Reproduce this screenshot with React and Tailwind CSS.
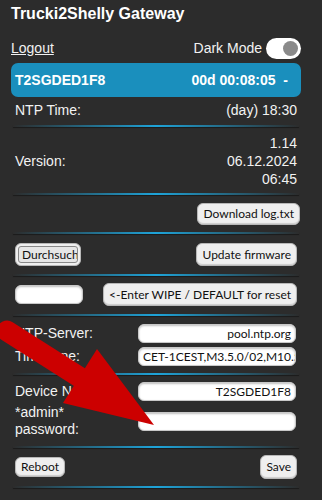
import React from "react";

const label = "text-[14px] leading-[17px] text-[#f2f2f2]";
const btn =
  "rounded-[6px] border border-[#b8b8b8] bg-[#efefef] px-[5px] text-[12px] text-[#111] shadow-[inset_0_-1px_1px_rgba(0,0,0,0.15)] whitespace-nowrap";
const inp =
  "h-[19px] w-[158px] rounded-[6px] border border-[#c8c8c8] bg-white px-[4px] text-[12px] text-[#111] shadow-[inset_0_1px_2px_rgba(0,0,0,0.25)] overflow-hidden whitespace-nowrap flex items-center";
const btnFont = { fontFamily: 'Lato, "Noto Sans", sans-serif' };

function Sep({ mt }) {
  return (
    <div className={`${mt} mx-[2px] h-[2px] bg-linear-to-r from-transparent via-[#1ea3d8] to-transparent shadow-[0_1px_1px_rgba(0,0,0,0.4)]`}></div>
  );
}

function Field({ mt, name, value, left }) {
  return (
    <div className={`${mt} flex h-[19px] items-center px-[4px]`}>
      <div className={`${label} w-[123px] shrink-0`}>{name}</div>
      <div className={`${inp} ${left ? "justify-start" : "justify-end"}`} style={btnFont}>
        {value}
      </div>
    </div>
  );
}

export default function App() {
  return (
    <div
      className="relative min-h-[500px] w-[322px] overflow-hidden bg-[#2c2c2c] pl-[11px] pr-[21px]"
      style={{ fontFamily: '"Liberation Sans", Arial, sans-serif' }}
    >
      <h1 className="pt-[3px] text-[16px] font-bold leading-[22px] text-white">
        Trucki2Shelly Gateway
      </h1>

      <div className="mt-[11px] flex h-[24px] items-center justify-between">
        <a className="text-[14px] text-[#f2f2f2] underline">Logout</a>
        <div className="flex items-center gap-[4px]">
          <span className="text-[14px] text-[#f2f2f2]">Dark Mode</span>
          <div className="flex h-[21px] w-[35px] items-center justify-end rounded-full bg-white pr-[3px]">
            <div className="h-[15px] w-[15px] rounded-full bg-[#8a8a8a]"></div>
          </div>
        </div>
      </div>

      <div className="mt-[3px] flex h-[34px] items-center justify-between rounded-[7px] bg-[#1a8fbd] pl-[4px] pr-[13px] text-[14px] font-bold text-white">
        <span>T2SGDED1F8</span>
        <span>00d 00:08:05&nbsp;&nbsp;-</span>
      </div>

      <div className="flex h-[26px] items-center justify-between px-[4px]">
        <span className={label}>NTP Time:</span>
        <span className={label}>(day) 18:30</span>
      </div>

      <Sep mt="mt-[2px]" />

      <div className="mt-[7px] flex items-center justify-between px-[4px]">
        <span className={label}>Version:</span>
        <div className="text-right text-[14px] leading-[18px] text-[#f2f2f2]">
          <div>1.14</div>
          <div>06.12.2024</div>
          <div>06:45</div>
        </div>
      </div>

      <Sep mt="mt-[5px]" />

      <div className="mt-[8px] flex h-[22px] justify-end px-[1px]" style={btnFont}>
        <button className={btn}>Download log.txt</button>
      </div>

      <Sep mt="mt-[7px]" />

      <div className="mt-[9px] flex h-[23px] items-center justify-between px-[4px]" style={btnFont}>
        <div className="flex h-[23px] w-[66px] items-center rounded-[6px] border border-[#b8b8b8] bg-[#efefef] p-[2px]">
          <div className="h-full w-full overflow-hidden whitespace-nowrap rounded-[3px] border border-[#888] bg-[#e6e6e6] pl-[3px] text-[12px] leading-[15px] text-[#111]">
            Durchsuchen
          </div>
        </div>
        <button className={`${btn} h-[23px]`}>Update firmware</button>
      </div>

      <Sep mt="mt-[8px]" />

      <div className="mt-[7px] flex h-[23px] items-center justify-between px-[4px]" style={btnFont}>
        <div className="h-[19px] w-[68px] rounded-[6px] border border-[#c8c8c8] bg-white shadow-[inset_0_1px_2px_rgba(0,0,0,0.25)]"></div>
        <button className={`${btn} h-[23px]`}>&lt;-Enter WIPE / DEFAULT for reset</button>
      </div>

      <Sep mt="mt-[8px]" />

      <Field mt="mt-[8px]" name="NTP-Server:" value="pool.ntp.org" />
      <Field mt="mt-[4px]" name="Timezone:" value="CET-1CEST,M3.5.0/02,M10.5.0/03" left />

      <Sep mt="mt-[7px]" />

      <Field mt="mt-[7px]" name="Device Name:" value="T2SGDED1F8" />
      <div className="mt-[3px] flex items-center px-[4px]">
        <div className={`${label} w-[123px] shrink-0`}>
          *admin*
          <br />
          password:
        </div>
        <div className={inp}></div>
      </div>

      <Sep mt="mt-[8px]" />

      <div className="mt-[7px] flex h-[24px] items-center justify-between px-[4px]" style={btnFont}>
        <button className={`${btn} h-[20px]`}>Reboot</button>
        <button className={`${btn} h-[24px]`}>Save</button>
      </div>

      <Sep mt="mt-[7px]" />

      <svg
        className="pointer-events-none absolute left-0 top-0"
        width="322"
        height="500"
        viewBox="0 0 322 500"
      >
        <line x1="7" y1="331" x2="84" y2="380" stroke="#cc0000" strokeWidth="21" strokeLinecap="round" />
        <polygon points="97,349 154,425 63,403" fill="#cc0000" />
      </svg>
    </div>
  );
}
